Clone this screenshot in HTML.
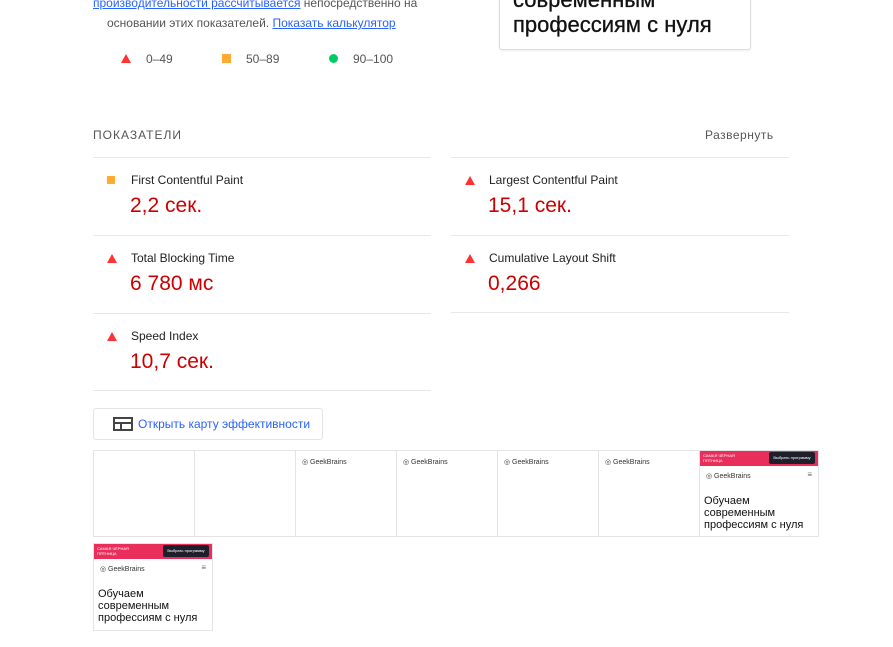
<!DOCTYPE html>
<html><head><meta charset="utf-8"><style>
body{margin:0;width:893px;height:647px;overflow:hidden;background:#fff;font-family:"Liberation Sans",sans-serif;color:#212121;position:relative}
.a{position:absolute;white-space:nowrap}
a{color:#2962ff;text-decoration:underline}
.hr{position:absolute;height:1px;background:#e8e8e8}
.lbl{font-size:12px;color:#212121}
.val{font-size:21px;color:#c00}
.tri{width:0;height:0;border-left:5px solid transparent;border-right:5px solid transparent;border-bottom:9px solid #f33}
.sq{width:8px;height:8px;background:#fa3}
.fr{position:absolute;border:1px solid #e4e4e4;box-sizing:border-box;top:450px;height:87px;background:#fff}
.gb{position:absolute;font-size:7px;color:#333;left:6px;top:7px}
.bar{position:absolute;left:0;right:0;top:0;height:15px;background:#ea2e5b}
.bar span{position:absolute;left:3px;top:2px;font-size:4px;color:#fff;line-height:5px}
.btn{position:absolute;right:3px;top:1px;height:12px;width:46px;background:#1f1f2b;border-radius:2px;color:#fff;font-size:4px;line-height:12px;text-align:center}
.big{position:absolute;left:4px;top:44px;font-size:11px;line-height:12px;color:#111}
</style></head><body>
<div class="a" style="left:93px;top:-4px;font-size:12px;color:#555"><a href="#">производительности рассчитывается</a> непосредственно на</div>
<div class="a" style="left:107px;top:16px;font-size:12px;color:#555">основании этих показателей. <a href="#">Показать калькулятор</a></div>
<div class="a tri" style="left:121px;top:54px"></div><div class="a" style="left:146px;top:52px;font-size:12px;color:#555">0–49</div>
<div class="a" style="left:222px;top:54px;width:9px;height:9px;background:#fa3"></div><div class="a" style="left:246px;top:52px;font-size:12px;color:#555">50–89</div>
<div class="a" style="left:329px;top:54px;width:9px;height:9px;border-radius:50%;background:#0c6"></div><div class="a" style="left:353px;top:52px;font-size:12px;color:#555">90–100</div>
<div class="a" style="left:499px;top:-20px;width:250px;height:68px;border:1px solid #ddd;border-radius:3px;box-shadow:0 1px 2px #eee"></div>
<div class="a" style="left:513px;top:-13px;font-size:22px;color:#111;line-height:25px;-webkit-text-stroke:0.3px #111">современным<br>профессиям с нуля</div>

<div class="a" style="left:93px;top:128px;font-size:12px;color:#555;letter-spacing:1px">ПОКАЗАТЕЛИ</div>
<div class="a" style="left:705px;top:128px;font-size:12px;color:#555;letter-spacing:0.5px">Развернуть</div>
<div class="hr" style="left:93px;width:338px;top:157px"></div><div class="hr" style="left:451px;width:338px;top:157px"></div>
<div class="hr" style="left:93px;width:338px;top:235px"></div><div class="hr" style="left:451px;width:338px;top:235px"></div>
<div class="hr" style="left:93px;width:338px;top:313px"></div><div class="hr" style="left:451px;width:338px;top:312px"></div>
<div class="hr" style="left:93px;width:338px;top:390px"></div>

<div class="a sq" style="left:107px;top:176px"></div><div class="a lbl" style="left:131px;top:173px">First Contentful Paint</div><div class="a val" style="left:130px;top:194px">2,2 сек.</div>
<div class="a tri" style="left:465px;top:176px"></div><div class="a lbl" style="left:489px;top:173px">Largest Contentful Paint</div><div class="a val" style="left:488px;top:194px">15,1 сек.</div>
<div class="a tri" style="left:107px;top:254px"></div><div class="a lbl" style="left:131px;top:251px">Total Blocking Time</div><div class="a val" style="left:130px;top:272px">6 780 мс</div>
<div class="a tri" style="left:465px;top:254px"></div><div class="a lbl" style="left:489px;top:251px">Cumulative Layout Shift</div><div class="a val" style="left:488px;top:272px">0,266</div>
<div class="a tri" style="left:107px;top:332px"></div><div class="a lbl" style="left:131px;top:329px">Speed Index</div><div class="a val" style="left:130px;top:350px">10,7 сек.</div>

<div class="a" style="left:93px;top:408px;width:228px;height:30px;border:1px solid #e4e4e4;border-radius:3px"></div>
<svg class="a" style="left:113px;top:417px" width="20" height="14" viewBox="0 0 20 14"><rect x="1" y="1" width="18" height="12" fill="none" stroke="#444" stroke-width="2"/><line x1="1" y1="6" x2="19" y2="6" stroke="#444" stroke-width="2"/><line x1="8" y1="6" x2="8" y2="13" stroke="#444" stroke-width="2"/></svg>
<div class="a" style="left:138px;top:417px;font-size:12px;color:#2962ff">Открыть карту эффективности</div>

<div class="fr" style="left:93px;width:102px"></div>
<div class="fr" style="left:194px;width:102px"></div>
<div class="fr" style="left:295px;width:102px"><div class="gb">◎ GeekBrains</div></div>
<div class="fr" style="left:396px;width:102px"><div class="gb">◎ GeekBrains</div></div>
<div class="fr" style="left:497px;width:102px"><div class="gb">◎ GeekBrains</div></div>
<div class="fr" style="left:598px;width:102px"><div class="gb">◎ GeekBrains</div></div>
<div class="fr" style="left:699px;width:120px"><div class="bar"><span>САМАЯ ЧЁРНАЯ<br>ПЯТНИЦА</span><div class="btn">Выбрать программу</div></div><div class="gb" style="top:21px">◎ GeekBrains</div><div class="a" style="right:6px;top:19px;font-size:8px;color:#666">≡</div><div class="big">Обучаем<br>современным<br>профессиям с нуля</div></div>
<div class="fr" style="left:93px;width:120px;top:543px;height:88px"><div class="bar"><span>САМАЯ ЧЁРНАЯ<br>ПЯТНИЦА</span><div class="btn">Выбрать программу</div></div><div class="gb" style="top:21px">◎ GeekBrains</div><div class="a" style="right:6px;top:19px;font-size:8px;color:#666">≡</div><div class="big">Обучаем<br>современным<br>профессиям с нуля</div></div>
</body></html>
